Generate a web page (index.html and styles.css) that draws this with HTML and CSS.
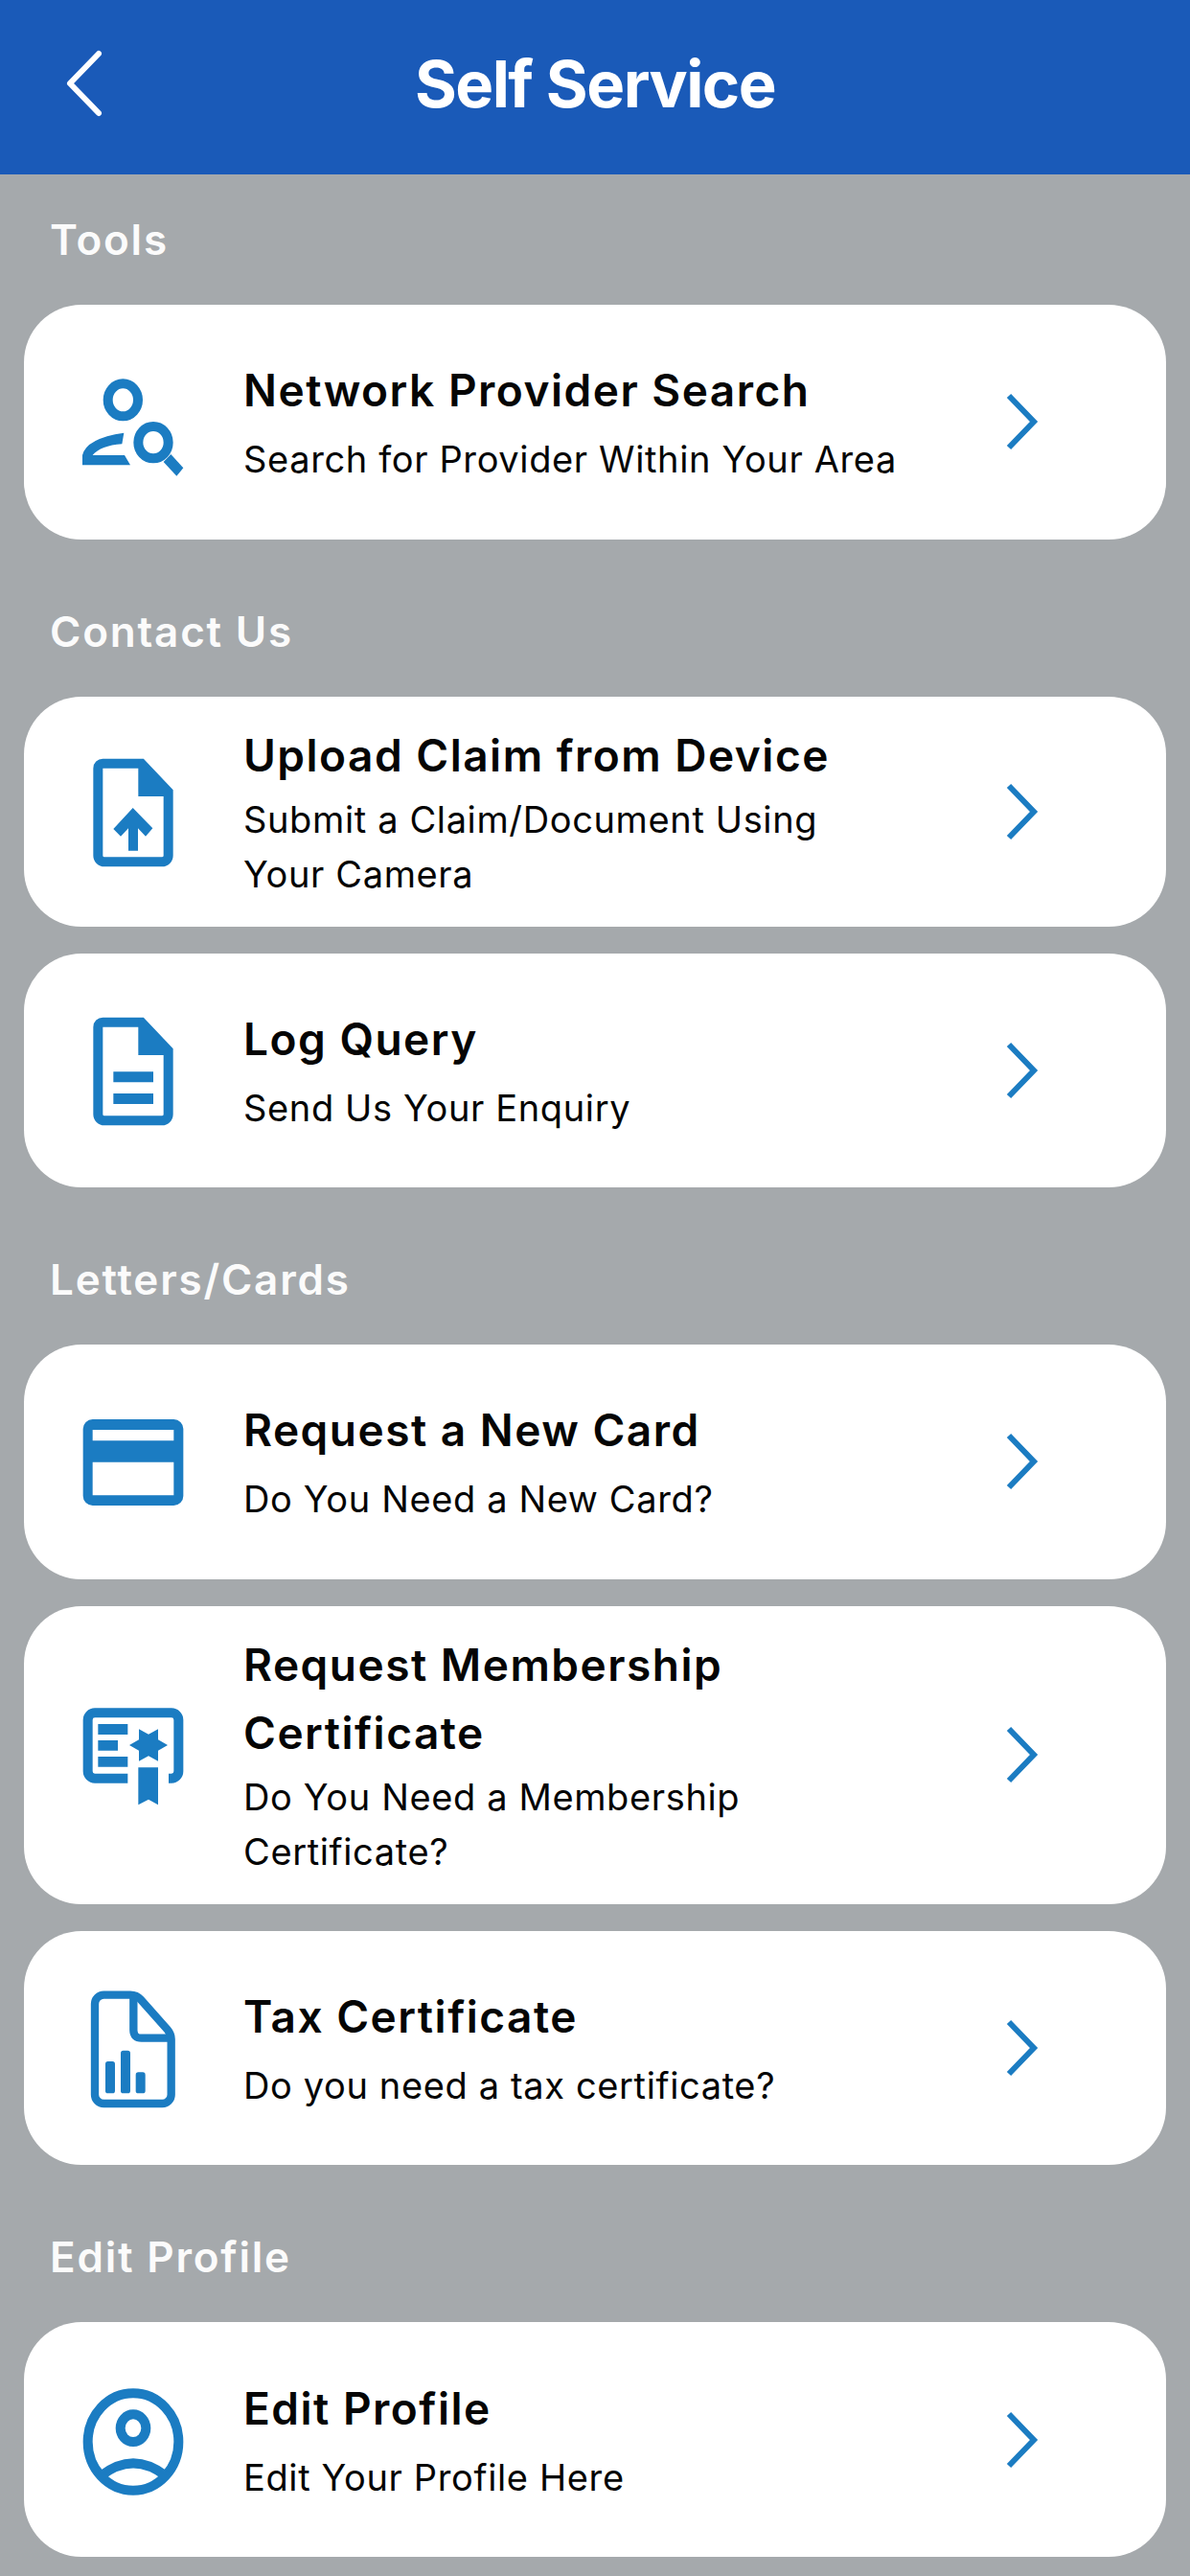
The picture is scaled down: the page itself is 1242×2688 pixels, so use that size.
FILE: index.html
```html
<!DOCTYPE html>
<html lang="en">
<head>
<meta charset="UTF-8">
<meta name="viewport" content="width=device-width, initial-scale=1.0">
<title>Self Service</title>
<link rel="stylesheet" href="styles.css">
</head>
<body>
<header class="top-bar">
    <svg class="back" viewBox="0 0 44 72"><path d="M37 5 L7 36 L37 67"/></svg>
    <h1 class="top-title">Self Service</h1>
    <span></span>
</header>

<main class="content">
    <section class="group">
        <h2 class="group-label">Tools</h2>
        <a class="card one-line">
            <svg class="card-icon" viewBox="0 0 480 420">
                <ellipse class="line" cx="235" cy="142" rx="47" ry="51"/>
                <path class="solid" d="M108 346 V315 Q120 262 238 245 L232 280 Q165 285 140 315 H240 L258 346 Z"/>
                <ellipse class="line" cx="330" cy="275" rx="47" ry="50"/>
                <path class="solid" d="M385 312 L424 355 L403 380 L362 336 Z"/>
            </svg>
            <div class="card-text">
                <div class="card-title">Network Provider Search</div>
                <div class="card-sub">Search for Provider Within Your Area</div>
            </div>
            <svg class="chevron" viewBox="0 0 40 64"><path d="M7 5 L33 32 L7 59"/></svg>
        </a>
    </section>

    <section class="group">
        <h2 class="group-label">Contact Us</h2>
        <a class="card">
            <svg class="card-icon" viewBox="0 78 480 420">
                <path class="line" d="M172 137 H293 L377 226 V425 a20 20 0 0 1 -20 20 H177 a20 20 0 0 1 -20 -20 V152 a15 15 0 0 1 15 -15 Z"/>
                <path class="solid" d="M283 125 H298 L390 225 V240 H283 Z"/>
                <path class="solid" d="M266 276 L328 340 L306 365 L282 340 V410 H252 V340 L228 365 L205 342 Z"/>
            </svg>
            <div class="card-text">
                <div class="card-title">Upload Claim from Device</div>
                <div class="card-sub">Submit a Claim/Document Using<br>Your Camera</div>
            </div>
            <svg class="chevron" viewBox="0 0 40 64"><path d="M7 5 L33 32 L7 59"/></svg>
        </a>
        <a class="card one-line">
            <svg class="card-icon" viewBox="0 888 480 420">
                <path class="line" d="M172 947 H293 L377 1036 V1235 a20 20 0 0 1 -20 20 H177 a20 20 0 0 1 -20 -20 V962 a15 15 0 0 1 15 -15 Z"/>
                <path class="solid" d="M283 935 H298 L390 1035 V1050 H283 Z"/>
                <path class="solid" d="M205 1102 H330 V1135 H205 Z M205 1170 H330 V1203 H205 Z"/>
            </svg>
            <div class="card-text">
                <div class="card-title">Log Query</div>
                <div class="card-sub">Send Us Your Enquiry</div>
            </div>
            <svg class="chevron" viewBox="0 0 40 64"><path d="M7 5 L33 32 L7 59"/></svg>
        </a>
    </section>

    <section class="group">
        <h2 class="group-label">Letters/Cards</h2>
        <a class="card one-line">
            <svg class="card-icon" viewBox="0 12 480 420">
                <path class="solid" fill-rule="evenodd" d="M140 90 H394 a30 30 0 0 1 30 30 V330 a30 30 0 0 1 -30 30 H140 a30 30 0 0 1 -30 -30 V120 a30 30 0 0 1 30 -30 Z M140 123 V157 H394 V123 Z M140 224 V328 H394 V224 Z"/>
            </svg>
            <div class="card-text">
                <div class="card-title">Request a New Card</div>
                <div class="card-sub">Do You Need a New Card?</div>
            </div>
            <svg class="chevron" viewBox="0 0 40 64"><path d="M7 5 L33 32 L7 59"/></svg>
        </a>
        <a class="card">
            <svg class="card-icon" viewBox="0 28 480 420">
                <path class="line" d="M250 312 H147 a22 22 0 0 1 -22 -22 V129 a22 22 0 0 1 22 -22 H387 a22 22 0 0 1 22 22 V290 a22 22 0 0 1 -22 22 H378"/>
                <path class="solid" d="M157 142 H250 V175 H157 Z M157 193 H219 V225 H157 Z M157 244 H250 V276 H157 Z"/>
                <path class="solid" d="M375 208 L345 225 L345 258 L315 242 L285 258 L285 225 L255 208 L285 191 L285 158 L315 174 L345 158 L345 191 Z"/>
                <path class="solid" d="M283 278 H345 V395 L315 378 L283 395 Z"/>
            </svg>
            <div class="card-text">
                <div class="card-title">Request Membership<br>Certificate</div>
                <div class="card-sub">Do You Need a Membership<br>Certificate?</div>
            </div>
            <svg class="chevron" viewBox="0 0 40 64"><path d="M7 5 L33 32 L7 59"/></svg>
        </a>
        <a class="card one-line">
            <svg class="card-icon" viewBox="0 46 480 420">
                <path class="thin" d="M175 90 H258 q20 0 32 14 L374 198 q12 14 12 30 V402 a28 28 0 0 1 -28 28 H175 a28 28 0 0 1 -28 -28 V118 a28 28 0 0 1 28 -28 Z"/>
                <path class="thin" d="M268 92 V200 q0 25 25 25 H384"/>
                <rect class="solid" x="180" y="298" width="30" height="100" rx="8"/>
                <rect class="solid" x="228" y="264" width="30" height="134" rx="8"/>
                <rect class="solid" x="275" y="332" width="30" height="66" rx="8"/>
            </svg>
            <div class="card-text">
                <div class="card-title">Tax Certificate</div>
                <div class="card-sub">Do you need a tax certificate?</div>
            </div>
            <svg class="chevron" viewBox="0 0 40 64"><path d="M7 5 L33 32 L7 59"/></svg>
        </a>
    </section>

    <section class="group">
        <h2 class="group-label">Edit Profile</h2>
        <a class="card one-line">
            <svg class="card-icon" viewBox="0 69 480 420">
                <ellipse class="line" cx="267" cy="285" rx="142" ry="152"/>
                <ellipse class="line" cx="267" cy="242" rx="40" ry="43"/>
                <path class="line" d="M165 392 Q267 312 370 392"/>
            </svg>
            <div class="card-text">
                <div class="card-title">Edit Profile</div>
                <div class="card-sub">Edit Your Profile Here</div>
            </div>
            <svg class="chevron" viewBox="0 0 40 64"><path d="M7 5 L33 32 L7 59"/></svg>
        </a>
    </section>
</main>
</body>
</html>
```

FILE: styles.css
```css
body {
    margin: 0;
    width: 1242px;
    height: 2688px;
    overflow: hidden;
    background-color: #a5a9ac;
    font-family: Inter, "Liberation Sans", sans-serif;
}

.top-bar {
    height: 182px;
    box-sizing: border-box;
    padding-bottom: 8px;
    background-color: #1a5ab8;
    display: grid;
    grid-template-columns: 1fr auto 1fr;
    align-items: center;
    color: white;
}
.back {
    width: 44px;
    height: 72px;
    margin-left: 66px;
    fill: none;
    stroke: white;
    stroke-width: 6;
    stroke-linecap: round;
    stroke-linejoin: round;
}
.top-title {
    margin: 0;
    font-size: 67px;
    font-weight: 700;
    letter-spacing: -1.5px;
    line-height: 1;
}

.content {
    display: flex;
    flex-direction: column;
    padding: 0 25px;
}
.group {
    display: flex;
    flex-direction: column;
    gap: 28px;
    margin-bottom: 28px;
}
.group-label {
    height: 136px;
    margin: 0 0 -28px 27px;
    display: flex;
    align-items: center;
    font-size: 44px;
    font-weight: 600;
    letter-spacing: 1.8px;
    color: #fbfbfb;
}

.card {
    box-sizing: border-box;
    padding: 26px 131px 26px 25px;
    border-radius: 60px;
    background-color: white;
    display: flex;
    align-items: center;
    color: #050505;
}
.card.one-line {
    min-height: 244.6px;
}
.card-icon {
    width: 160px;
    height: 140px;
    flex-shrink: 0;
    margin-right: 44px;
}
.card-icon .solid {
    fill: #1b7cc2;
}
.card-icon .line,
.card-icon .thin {
    fill: none;
    stroke: #1b7cc2;
    stroke-width: 30;
}
.card-icon .thin {
    stroke-width: 25;
}
.card-text {
    flex: 1;
}
.card-title {
    font-size: 46px;
    font-weight: 600;
    line-height: 71px;
    letter-spacing: 1.5px;
}
.card-sub {
    margin-top: 3px;
    font-size: 38px;
    line-height: 57px;
    letter-spacing: 0.63px;
}
.one-line .card-sub {
    margin-top: 8px;
}
.chevron {
    width: 40px;
    height: 64px;
    flex-shrink: 0;
    fill: none;
    stroke: #1b7cc2;
    stroke-width: 6;
}
```
